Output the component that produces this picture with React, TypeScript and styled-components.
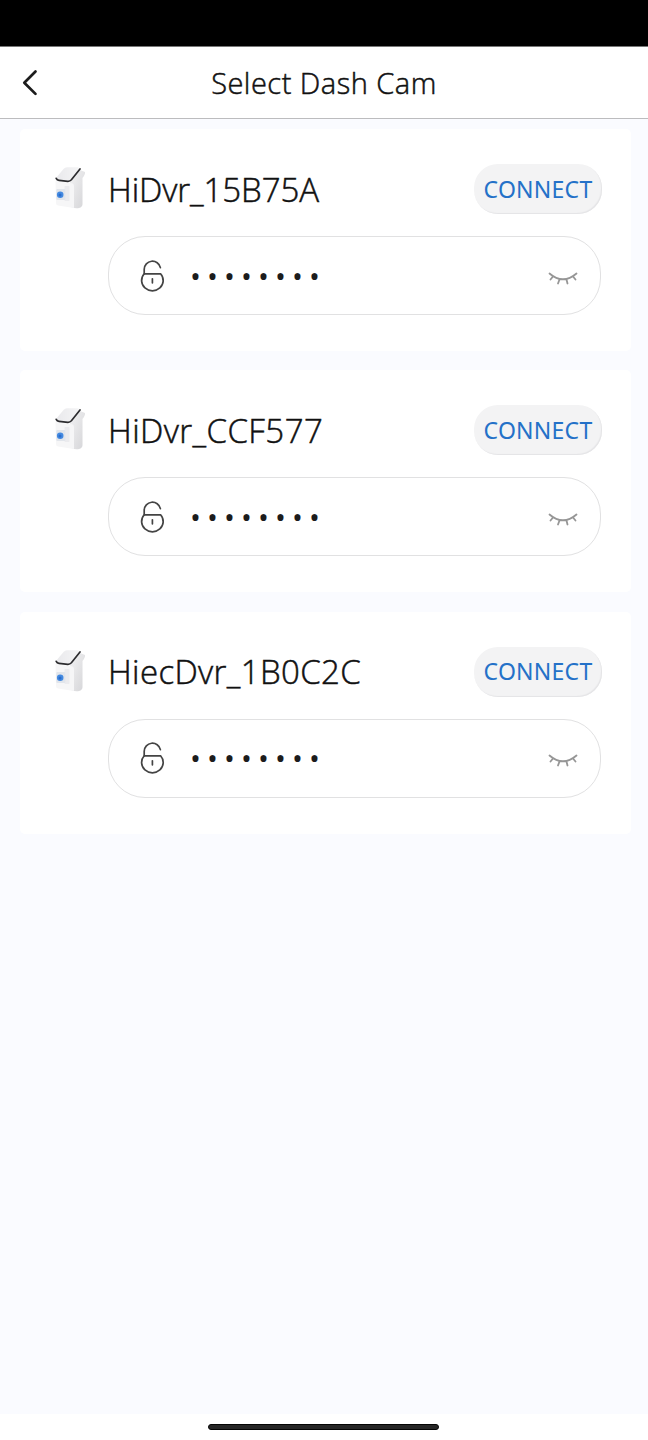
import React from 'react';
import styled, { createGlobalStyle } from 'styled-components';

const Global = createGlobalStyle`
  * { box-sizing: border-box; }
  body { margin: 0; background: #fafbff; font-family: "Open Sans", "Noto Sans", sans-serif; color: #111; }
`;

const Screen = styled.div`
  height: 1440px;
  display: flex;
  flex-direction: column;
  background: #fafbff;
`;

const StatusBar = styled.div`
  height: 47px;
  flex: none;
  background: #000;
  border-bottom: 1px solid #777;
`;

const Header = styled.header`
  height: 72px;
  flex: none;
  display: grid;
  grid-template-columns: 60px 1fr 60px;
  align-items: center;
  background: #fff;
  border-bottom: 1px solid #bcbcbe;
`;

const BackButton = styled.button`
  display: flex;
  padding: 0 0 0 22px;
  border: 0;
  background: none;
`;

const Title = styled.h1`
  margin: 0;
  text-align: center;
  font-size: 29px;
  font-weight: 300;
  line-height: 40px;
  letter-spacing: 0.5px;
  white-space: nowrap;
  -webkit-text-stroke: 0.5px #111;
`;

const List = styled.main`
  flex: 1;
  display: flex;
  flex-direction: column;
  gap: 19.4px;
  padding: 10px 17px 0 20px;
`;

const Card = styled.section`
  height: 222px;
  padding: 35px 29px 0 34px;
  border-radius: 5px;
  background: #fff;
`;

const DeviceRow = styled.div`
  height: 50px;
  display: flex;
  align-items: center;
`;

const DeviceName = styled.div<{ $tracking: number }>`
  flex: 1;
  margin-left: 20px;
  padding-top: 1px;
  font-size: 33px;
  font-weight: 300;
  line-height: 50px;
  letter-spacing: ${(p) => p.$tracking}px;
  white-space: nowrap;
  -webkit-text-stroke: 0.5px #111;
`;

const ConnectButton = styled.button`
  width: 128px;
  height: 50px;
  padding: 0;
  border: 0;
  border-radius: 24px;
  background: #f3f3f4;
  box-shadow: inset -1px -1px 1px #e4e4e6;
  color: #2471c8;
  font-family: "Noto Sans", sans-serif;
  font-size: 23px;
  line-height: 49px;
  letter-spacing: 0.25px;
  white-space: nowrap;
`;

const PasswordField = styled.div`
  height: 79px;
  margin: 22px 1px 0 54px;
  padding: 0 21px 0 31px;
  display: flex;
  align-items: center;
  border: 1px solid #e1e1e2;
  border-radius: 37px;
`;

const Mask = styled.span`
  flex: 1;
  margin-left: 24px;
  font-size: 29px;
  line-height: 40px;
  letter-spacing: 6.1px;
  color: #1c1c1c;
`;

const HomeArea = styled.footer`
  height: 26px;
  flex: none;
  display: flex;
  justify-content: center;
  padding: 10px 1px 0 0;
  background: #fff;
`;

const HomeIndicator = styled.div`
  width: 231px;
  height: 6px;
  border-radius: 3px;
  background: #262626;
  border: 1px solid #050505;
`;

const BackIcon = () => (
  <svg width="16" height="28" viewBox="0 0 16 28" fill="none" stroke="#1c1c1c" strokeWidth="2.7" strokeLinecap="round" strokeLinejoin="round">
    <path d="M13.5 2.5 2.3 13.7 13.5 24.9" />
  </svg>
);

const CameraIcon = () => (
  <svg width="34" height="46" viewBox="0 0 34 46">
    <defs>
      <linearGradient id="side" x1="0" y1="0" x2="1" y2="1">
        <stop offset="0" stopColor="#f3f3f4" />
        <stop offset="1" stopColor="#d4d4d7" />
      </linearGradient>
      <linearGradient id="lid" x1="0" y1="0" x2="1" y2="0">
        <stop offset="0" stopColor="#e9e9ec" />
        <stop offset="1" stopColor="#f5f5f6" />
      </linearGradient>
    </defs>
    <path d="M16 16 26 4 31 6Q31.5 8 28.5 12V38Q28.5 41 25 42Q22 43 17 41Z" fill="url(#side)" />
    <path d="M1.5 15 16 17Q20 17 20 20V42L4 39.5Q2 39 2 37Z" fill="#f6f6f7" />
    <rect x="10.5" y="20" width="5" height="15" rx="1" fill="#ebebee" />
    <rect x="2.3" y="23" width="9" height="11" rx="1" fill="#e1e5eb" />
    <path d="M2 12 9.5 3Q11 1.3 13 1.3H24L26 2.6 17.5 13.5 15 15H5Z" fill="url(#lid)" />
    <path d="M2.2 12.4Q3 14.2 5 14.4L13.8 15.3Q16 15.4 17.4 13.8L26 3" fill="none" stroke="#2c2c2f" strokeWidth="1.7" strokeLinecap="round" />
    <circle cx="6.2" cy="28.8" r="3.3" fill="#4389e0" />
    <circle cx="6" cy="29" r="1.5" fill="#2a6dcc" />
  </svg>
);

const LockIcon = () => (
  <svg width="26" height="36" viewBox="0 -0.8 26 36" fill="none" stroke="#444" strokeWidth="1.7" strokeLinecap="round" strokeLinejoin="round">
    <path d="M4.2 15V10.5A8.2 8.2 0 0 1 20.4 8.8" />
    <path d="M4.2 15H20.6A10.8 10.3 0 1 1 4.2 15Z" />
    <path d="M12.4 20v4" />
  </svg>
);

const ClosedEyeIcon = () => (
  <svg width="32" height="24" viewBox="0 0 32 24" fill="none" stroke="#969696" strokeWidth="1.8" strokeLinecap="round">
    <path d="M2.5 9.5Q16 21 29.5 9.5M6 12.5 3.5 15.5M12.5 15.5 11 19.5M19.5 15.5 20.5 19.5M26 12.5 28.5 15.5" />
  </svg>
);

const devices = [
  { name: 'HiDvr_15B75A', tracking: -0.08 },
  { name: 'HiDvr_CCF577', tracking: 0.42 },
  { name: 'HiecDvr_1B0C2C', tracking: 0.36 },
];

export default function App() {
  return (
    <Screen>
      <Global />
      <StatusBar />
      <Header>
        <BackButton aria-label="Back"><BackIcon /></BackButton>
        <Title>Select Dash Cam</Title>
      </Header>
      <List>
        {devices.map((d) => (
          <Card key={d.name}>
            <DeviceRow>
              <CameraIcon />
              <DeviceName $tracking={d.tracking}>{d.name}</DeviceName>
              <ConnectButton>CONNECT</ConnectButton>
            </DeviceRow>
            <PasswordField>
              <LockIcon />
              <Mask>••••••••</Mask>
              <ClosedEyeIcon />
            </PasswordField>
          </Card>
        ))}
      </List>
      <HomeArea><HomeIndicator /></HomeArea>
    </Screen>
  );
}
